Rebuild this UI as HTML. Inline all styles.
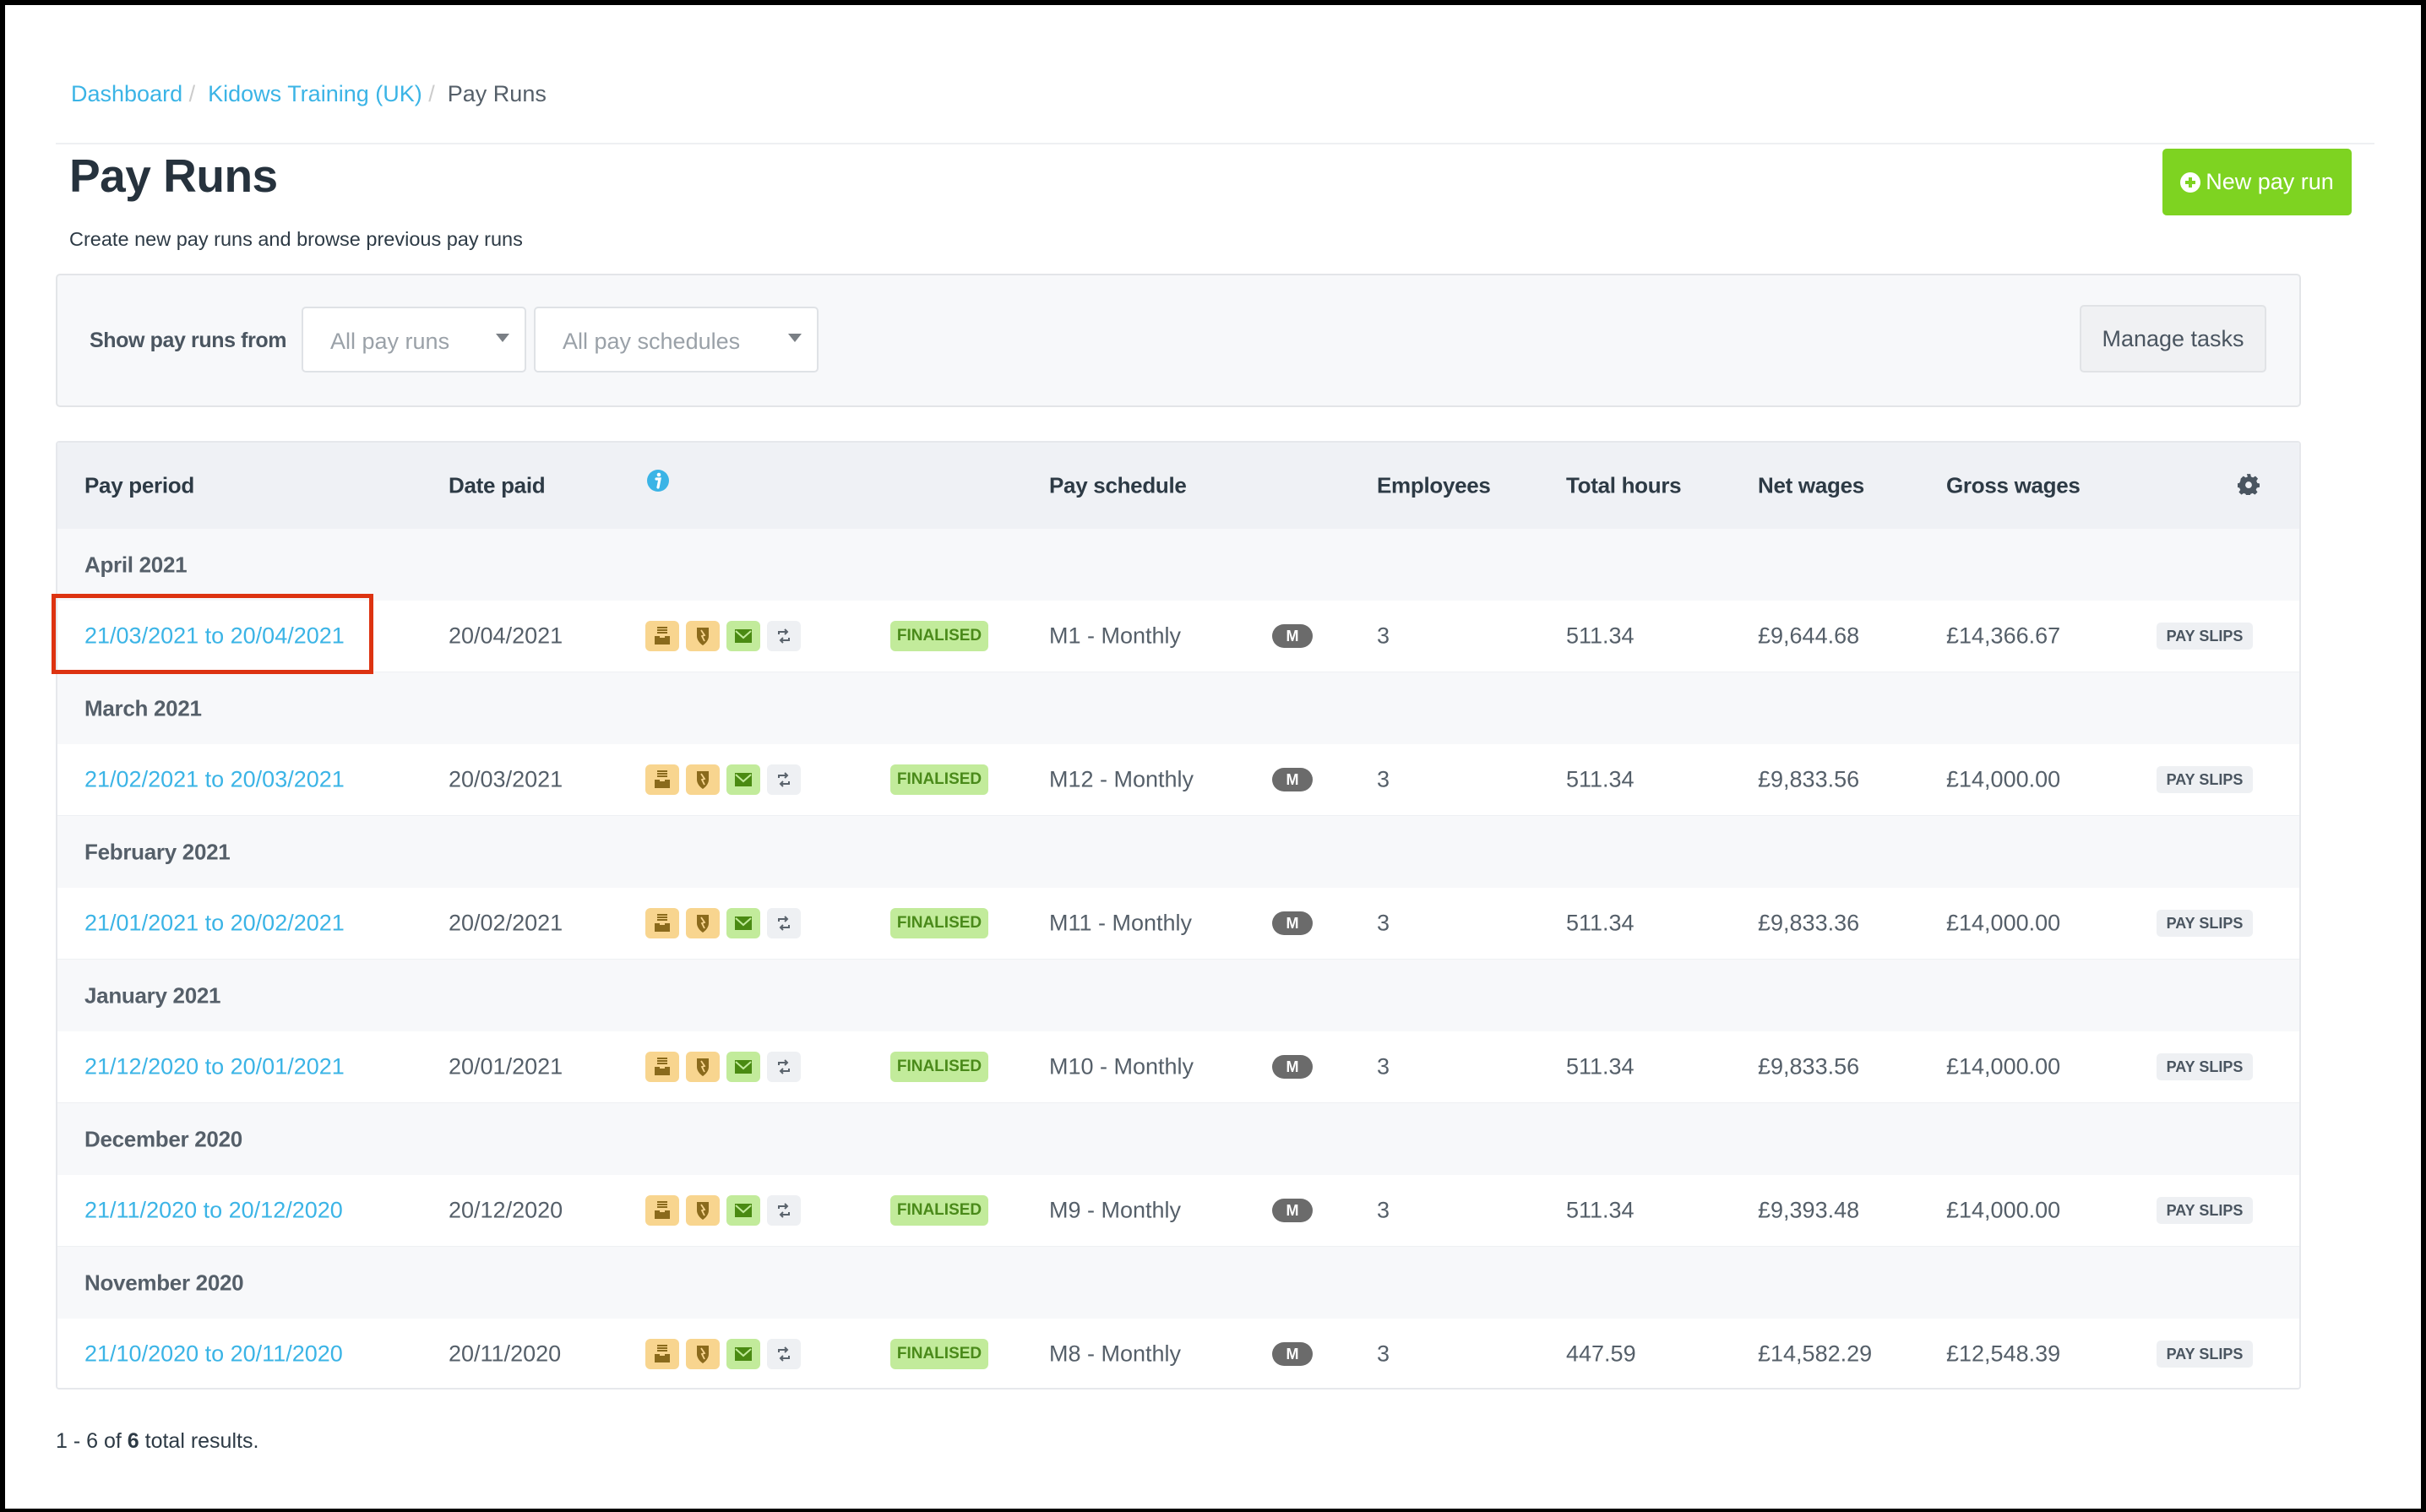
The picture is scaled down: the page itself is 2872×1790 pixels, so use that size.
<!DOCTYPE html>
<html><head><meta charset="utf-8"><style>
*{margin:0;padding:0;box-sizing:border-box}
html,body{width:2872px;height:1790px;overflow:hidden}
body{background:#000;font-family:"Liberation Sans",sans-serif;color:#555f69;position:relative}
.page{position:absolute;left:6px;top:6px;width:2860px;height:1780px;background:#fff}
.a{position:absolute;white-space:nowrap}
.link{color:#3bb4e6}
.tbl{position:absolute;left:66px;top:524px;width:2658px;height:1123px;border:2px solid #e6e8ec;border-radius:4px;overflow:hidden;background:#fff}
.hd{position:absolute;left:0;top:0;width:100%;height:102px;background:#eff1f5}
.grp{position:absolute;left:0;width:100%;height:85px;background:#f7f8fa}
.row{position:absolute;left:0;width:100%;height:86px;background:#fff;border-bottom:2px solid #eef0f3}
.t{position:absolute;top:50%;transform:translateY(-50%);font-size:27px;white-space:nowrap}
.ic{position:absolute;top:50%;transform:translateY(-50%);width:40px;height:36px;border-radius:6px;display:flex;align-items:center;justify-content:center}
.fin{position:absolute;top:50%;transform:translateY(-50%);left:986px;width:116px;height:36px;border-radius:6px;background:#c2eb9b;color:#4a8a1a;font-size:19px;font-weight:bold;display:flex;align-items:center;justify-content:center}
.mb{position:absolute;top:50%;transform:translateY(-50%);left:1438px;width:48px;height:28px;border-radius:14px;background:#6b6b6b;color:#fff;font-size:18px;font-weight:bold;display:flex;align-items:center;justify-content:center}
.ps{position:absolute;top:50%;transform:translateY(-50%);left:2485px;width:114px;height:32px;border-radius:5px;background:#eef0f3;color:#4a5560;font-size:18px;font-weight:bold;display:flex;align-items:center;justify-content:center}
.th{position:absolute;top:50%;transform:translateY(-50%);font-size:26px;font-weight:bold;color:#2d3a45;white-space:nowrap;letter-spacing:-0.3px}
</style></head><body><div class="page">
<div class="a" style="left:78px;top:90px;font-size:27px"><span class="link">Dashboard</span> <span style="color:#ccc">/</span> &nbsp;<span class="link">Kidows Training (UK)</span> <span style="color:#ccc">/</span> &nbsp;<span style="color:#555f69">Pay Runs</span></div>
<div class="a" style="left:60px;top:163px;width:2745px;height:2px;background:#eef0f2"></div>
<div class="a" style="left:76px;top:170px;font-size:55px;font-weight:bold;color:#26323d;letter-spacing:-0.5px">Pay Runs</div>
<div class="a" style="left:76px;top:264px;font-size:23.5px;color:#2d3a45">Create new pay runs and browse previous pay runs</div>
<div class="a" style="left:2554px;top:170px;width:224px;height:79px;background:#7ed321;border-radius:5px;color:#fff;font-size:27px;display:flex;align-items:center;justify-content:center;gap:6px"><svg width="24" height="24" viewBox="0 0 24 24"><circle cx="12" cy="12" r="12" fill="#fff"/><path d="M12 6v12M6 12h12" stroke="#7ed321" stroke-width="4"/></svg>New pay run</div>
<div class="a" style="left:60px;top:318px;width:2658px;height:158px;background:#f7f8fa;border:2px solid #e3e5e8;border-radius:5px"></div>
<div class="a" style="left:100px;top:383px;font-size:25px;font-weight:bold;color:#4a5560;letter-spacing:-0.4px">Show pay runs from</div>
<div class="a" style="left:351px;top:357px;width:266px;height:78px;background:#fff;border:2px solid #dfe2e6;border-radius:5px"><span class="a" style="left:32px;top:24px;font-size:27px;color:#9aa1a8">All pay runs</span><span class="a" style="right:18px;top:30px;width:0;height:0;border-left:8px solid transparent;border-right:8px solid transparent;border-top:10px solid #7a7f85"></span></div>
<div class="a" style="left:626px;top:357px;width:337px;height:78px;background:#fff;border:2px solid #dfe2e6;border-radius:5px"><span class="a" style="left:32px;top:24px;font-size:27px;color:#9aa1a8">All pay schedules</span><span class="a" style="right:18px;top:30px;width:0;height:0;border-left:8px solid transparent;border-right:8px solid transparent;border-top:10px solid #7a7f85"></span></div>
<div class="a" style="left:2456px;top:355px;width:221px;height:80px;background:#f0f1f3;border:2px solid #e1e3e6;border-radius:5px;font-size:27px;color:#4a5560;display:flex;align-items:center;justify-content:center">Manage tasks</div>
<div class="tbl" style="left:60px;top:516px">
<div class="hd">
<span class="th" style="left:32px">Pay period</span>
<span class="th" style="left:463px">Date paid</span>
<svg style="position:absolute;left:697px;top:30px" width="28" height="30" viewBox="0 0 28 30"><circle cx="14" cy="15" r="13" fill="#3bb4e6"/><circle cx="15" cy="8" r="2.3" fill="#fff"/><path d="M12 13h4l-2 10" stroke="#fff" stroke-width="3.2" fill="none" stroke-linecap="round"/></svg>
<span class="th" style="left:1174px">Pay schedule</span>
<span class="th" style="left:1562px">Employees</span>
<span class="th" style="left:1786px">Total hours</span>
<span class="th" style="left:2013px">Net wages</span>
<span class="th" style="left:2236px">Gross wages</span>
<svg style="position:absolute;left:2581px;top:36px" width="26" height="26" viewBox="0 0 24 24"><path fill="#4a5560" d="M10 1h4l.6 3 2.2 1 2.6-1.7 2.8 2.8L20.5 8.7l1 2.3 2.5.5v4l-3 .6-1 2.2 1.7 2.6-2.8 2.8-2.6-1.7-2.3 1-.5 3h-4l-.6-3-2.2-1-2.6 1.7-2.8-2.8 1.7-2.6-1-2.2-3-.6v-4l3-.6 1-2.2L3.4 6.1l2.8-2.8L8.8 5l2.2-1z"/><circle cx="12" cy="13" r="3.6" fill="#eff1f5"/></svg>
</div>
<div class="grp" style="top:102px"><span class="t" style="left:32px;font-weight:bold;color:#555f69;font-size:26px;letter-spacing:-0.3px">April 2021</span></div>
<div class="row" style="top:187px"><span class="t link" style="left:32px">21/03/2021 to 20/04/2021</span><span class="t" style="left:463px">20/04/2021</span>
<div class="ic" style="left:696px;background:#f8d58f"><svg width="20" height="22" viewBox="0 0 20 22"><path d="M4 1h12M4 4h12M4 7h12" stroke="#8a6a1c" stroke-width="2"/><path d="M1 11h6v2h6v-2h6v10H1z" fill="#8a6a1c"/></svg></div>
<div class="ic" style="left:744px;background:#f8d58f"><svg width="18" height="24" viewBox="0 0 18 24"><path d="M2 2h14v10c0 5-4 9-7 11-3-2-7-6-7-11z" fill="#8a6a1c"/><path d="M7 5l4 6-3 1 3 6" stroke="#f8d58f" stroke-width="1.8" fill="none"/></svg></div>
<div class="ic" style="left:792px;background:#c2eb9b"><svg width="20" height="16" viewBox="0 0 20 16"><rect width="20" height="16" fill="#4a8a12"/><path d="M1 2l9 8 9-8" stroke="#c2eb9b" stroke-width="2" fill="none"/></svg></div>
<div class="ic" style="left:840px;background:#eef0f3"><svg width="18" height="22" viewBox="0 0 18 22"><path d="M3 9V6h10M10 3l3 3-3 3M15 13v3H5M8 19l-3-3 3-3" stroke="#5a636c" stroke-width="2" fill="none"/></svg></div>
<div class="fin">FINALISED</div><span class="t" style="left:1174px">M1 - Monthly</span><div class="mb">M</div>
<span class="t" style="left:1562px">3</span><span class="t" style="left:1786px">511.34</span><span class="t" style="left:2013px">£9,644.68</span><span class="t" style="left:2236px">£14,366.67</span><div class="ps">PAY SLIPS</div></div>
</div>
<div class="a" style="left:60px;top:1686px;font-size:25px;color:#2d3a45">1 - 6 of <b>6</b> total results.</div>
<div class="a" style="left:55px;top:697px;width:381px;height:95px;border:5px solid #dd3311"></div>
</div>
<script>
var data=[["March 2021","21/02/2021 to 20/03/2021","20/03/2021","M12 - Monthly","511.34","£9,833.56","£14,000.00"],
["February 2021","21/01/2021 to 20/02/2021","20/02/2021","M11 - Monthly","511.34","£9,833.36","£14,000.00"],
["January 2021","21/12/2020 to 20/01/2021","20/01/2021","M10 - Monthly","511.34","£9,833.56","£14,000.00"],
["December 2020","21/11/2020 to 20/12/2020","20/12/2020","M9 - Monthly","511.34","£9,393.48","£14,000.00"],
["November 2020","21/10/2020 to 20/11/2020","20/11/2020","M8 - Monthly","447.59","£14,582.29","£12,548.39"]];
var tbl=document.querySelector('.tbl');var g=tbl.querySelector('.grp'),r=tbl.querySelector('.row');
data.forEach(function(d,i){var top=102+(i+1)*170;var G=g.cloneNode(true);G.style.top=top+'px';G.querySelector('.t').textContent=d[0];tbl.appendChild(G);
var R=r.cloneNode(true);R.style.top=(top+85)+'px';var ts=R.querySelectorAll('.t');ts[0].textContent=d[1];ts[1].textContent=d[2];ts[2].textContent=d[3];ts[4].textContent=d[4];ts[5].textContent=d[5];ts[6].textContent=d[6];tbl.appendChild(R);});
</script>
</body></html>
